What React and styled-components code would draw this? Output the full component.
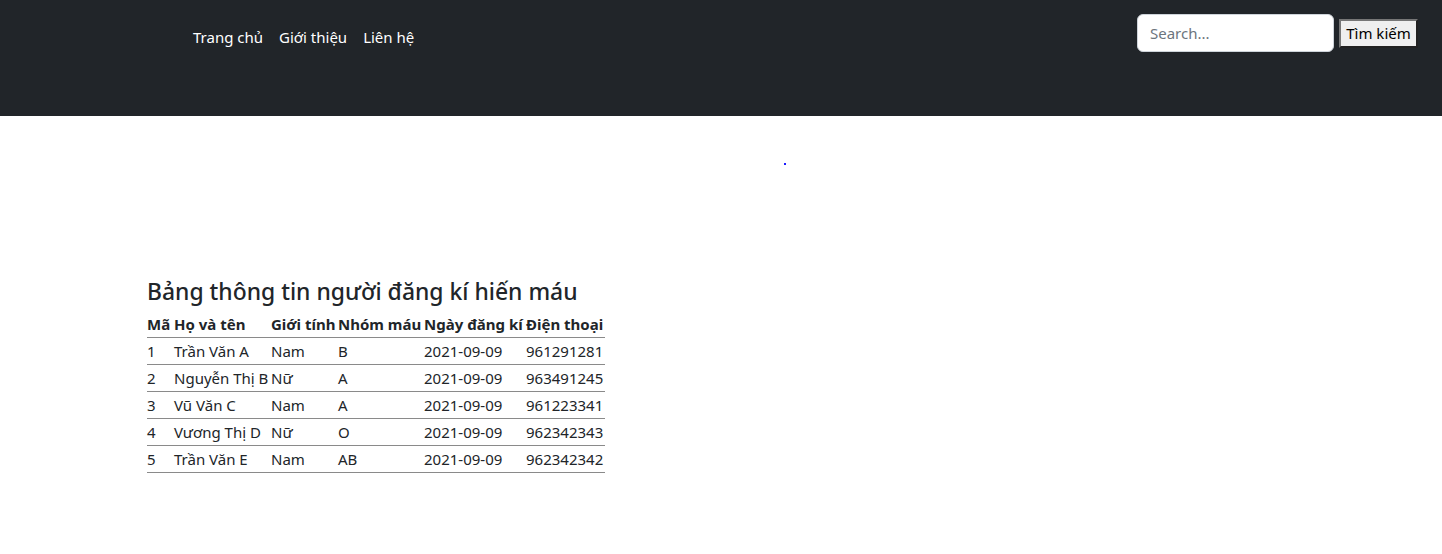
import styled, { createGlobalStyle } from "styled-components";

const GlobalStyle = createGlobalStyle`
  body {
    margin: 0;
    font-family: "Noto Sans", "Open Sans", sans-serif;
    font-size: 15px;
    line-height: 1.5;
    color: #212529;
    background: #fff;
  }
`;

const rows = [
  { id: 1, name: "Trần Văn A", sex: "Nam", blood: "B", date: "2021-09-09", phone: "961291281" },
  { id: 2, name: "Nguyễn Thị B", sex: "Nữ", blood: "A", date: "2021-09-09", phone: "963491245" },
  { id: 3, name: "Vũ Văn C", sex: "Nam", blood: "A", date: "2021-09-09", phone: "961223341" },
  { id: 4, name: "Vương Thị D", sex: "Nữ", blood: "O", date: "2021-09-09", phone: "962342343" },
  { id: 5, name: "Trần Văn E", sex: "Nam", blood: "AB", date: "2021-09-09", phone: "962342342" },
];

const colWidths = [27, 97, 67, 86, 102, 79];

function App() {
  return (
    <>
      <GlobalStyle />
      <Navbar>
        <NavLinks>
          <NavLink href="#">Trang chủ</NavLink>
          <NavLink href="#">Giới thiệu</NavLink>
          <NavLink href="#">Liên hệ</NavLink>
        </NavLinks>
        <SearchForm>
          <SearchInput placeholder="Search..." />
          <SearchButton>Tìm kiếm</SearchButton>
        </SearchForm>
      </Navbar>
      <Banner>
        <Dot />
      </Banner>
      <Content>
        <Title>Bảng thông tin người đăng kí hiến máu</Title>
        <Table>
          <colgroup>
            {colWidths.map((w, i) => <col key={i} style={{ width: w }} />)}
          </colgroup>
          <thead>
            <tr>
              <Th>Mã</Th>
              <Th>Họ và tên</Th>
              <Th>Giới tính</Th>
              <Th>Nhóm máu</Th>
              <Th>Ngày đăng kí</Th>
              <Th>Điện thoại</Th>
            </tr>
          </thead>
          <tbody>
            {rows.map(r => (
              <tr key={r.id}>
                <Td>{r.id}</Td>
                <Td>{r.name}</Td>
                <Td>{r.sex}</Td>
                <Td>{r.blood}</Td>
                <Td>{r.date}</Td>
                <Td>{r.phone}</Td>
              </tr>
            ))}
          </tbody>
        </Table>
      </Content>
    </>
  );
}

export default App;

const Navbar = styled.nav`
  height: 116px;
  background: #212529;
  display: flex;
  justify-content: space-between;
  align-items: flex-start;
  padding: 0 24px 0 193px;
  box-sizing: border-box;
`;

const NavLinks = styled.div`
  display: flex;
  gap: 16px;
  padding-top: 25px;
`;

const NavLink = styled.a`
  color: #fff;
  text-decoration: none;
  font-size: 15px;
  line-height: 24px;
`;

const SearchForm = styled.form`
  display: flex;
  align-items: center;
  gap: 5px;
  padding-top: 14px;
`;

const SearchInput = styled.input`
  width: 197px;
  height: 38px;
  box-sizing: border-box;
  border: 1px solid #ced4da;
  border-radius: 6px;
  padding: 6px 12px;
  font-family: "Noto Sans", sans-serif;
  font-size: 15px;
  color: #212529;
  outline: none;

  &::placeholder {
    color: #6c757d;
  }
`;

const SearchButton = styled.button`
  height: 29px;
  width: 79px;
  padding: 0;
  font-family: "Noto Sans", sans-serif;
  font-size: 15px;
  color: #000;
  background: #efefef;
  border: 2px outset #767676;
  border-radius: 0;
`;

const Banner = styled.div`
  height: 162px;
  display: flex;
  justify-content: center;
  padding-top: 47px;
  box-sizing: border-box;
  padding-left: 127px;
`;

const Dot = styled.span`
  width: 2px;
  height: 2px;
  background: #1a1aff;
`;

const Content = styled.div`
  padding-left: 147px;
`;

const Title = styled.h4`
  margin: 0 0 6px;
  font-size: 22.9px;
  font-weight: 500;
  line-height: 1.2;
`;

const Table = styled.table`
  border-collapse: collapse;
  table-layout: fixed;
  width: 458px;
`;

const Th = styled.th`
  text-align: left;
  font-weight: 700;
  padding: 0;
  height: 26px;
  white-space: nowrap;
  border-bottom: 1px solid #8a8a8a;
  font-size: 15px;
`;

const Td = styled.td`
  padding: 0;
  height: 26px;
  white-space: nowrap;
  border-bottom: 1px solid #8a8a8a;
  font-size: 15px;
`;
